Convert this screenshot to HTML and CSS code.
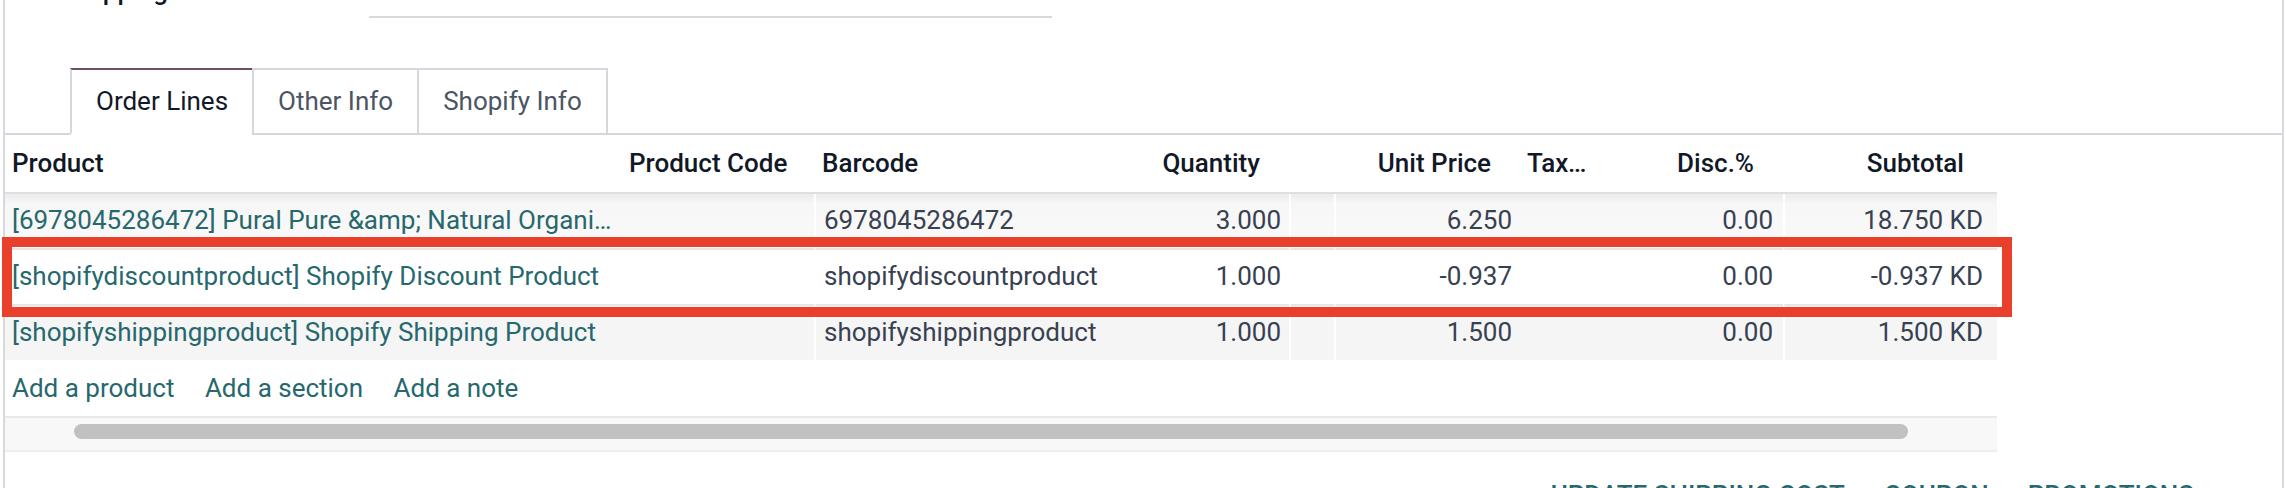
FILE: index.html
```html
<!DOCTYPE html>
<html lang="en">
<head>
<meta charset="utf-8">
<title>Order Lines</title>
<link rel="stylesheet" href="styles.css">
</head>
<body>
<div class="sheet">
  <div class="field-row">
    <label class="field-label">Shipping Address</label>
    <div class="field-input"></div>
  </div>

  <ul class="nav">
    <li class="tab active">Order Lines</li>
    <li class="tab">Other Info</li>
    <li class="tab">Shopify Info</li>
  </ul>

  <div class="list-wrap">
    <table class="list">
      <colgroup>
        <col class="w-product"><col class="w-code"><col class="w-barcode"><col class="w-qty"><col class="w-blank"><col class="w-price"><col class="w-tax"><col class="w-disc"><col class="w-sub">
      </colgroup>
      <thead>
        <tr>
          <th>Product</th>
          <th>Product Code</th>
          <th>Barcode</th>
          <th class="num">Quantity</th>
          <th></th>
          <th class="num">Unit Price</th>
          <th class="tax">Taxes</th>
          <th class="num">Disc.%</th>
          <th class="num sub">Subtotal</th>
        </tr>
      </thead>
      <tbody>
        <tr class="odd first">
          <td class="link"><span class="trunc">[6978045286472] Pural Pure &amp;amp; Natural Organic Cotton Rounds</span></td>
          <td></td>
          <td class="sep">6978045286472</td>
          <td class="num">3.000</td>
          <td class="sep"></td>
          <td class="num sep">6.250</td>
          <td></td>
          <td class="num disc">0.00</td>
          <td class="num sub sep">18.750 KD</td>
        </tr>
        <tr class="even">
          <td class="link">[shopifydiscountproduct] Shopify Discount Product</td>
          <td></td>
          <td class="sep">shopifydiscountproduct</td>
          <td class="num">1.000</td>
          <td class="sep"></td>
          <td class="num sep">-0.937</td>
          <td></td>
          <td class="num disc">0.00</td>
          <td class="num sub sep">-0.937 KD</td>
        </tr>
        <tr class="odd last">
          <td class="link">[shopifyshippingproduct] Shopify Shipping Product</td>
          <td></td>
          <td class="sep">shopifyshippingproduct</td>
          <td class="num">1.000</td>
          <td class="sep"></td>
          <td class="num sep">1.500</td>
          <td></td>
          <td class="num disc">0.00</td>
          <td class="num sub sep">1.500 KD</td>
        </tr>
        <tr class="add-row">
          <td colspan="9">
            <a class="add-link">Add a product</a>
            <a class="add-link">Add a section</a>
            <a class="add-link">Add a note</a>
          </td>
        </tr>
      </tbody>
    </table>
    <div class="hscroll"><div class="thumb"></div></div>
    <div class="highlight"></div>
  </div>

  <div class="actions">
    <a class="action">Update Shipping Cost</a>
    <a class="action">Coupon</a>
    <a class="action">Promotions</a>
  </div>
</div>
</body>
</html>
```

FILE: styles.css
```css
html, body {
  margin: 0;
  padding: 0;
  overflow: hidden;
  background: #ffffff;
}

body {
  width: 2286px;
  height: 488px;
  font-family: Roboto, "Liberation Sans", sans-serif;
  font-size: 26px;
  line-height: 39px;
  color: #374151;
}

.sheet {
  margin-left: 3px;
  width: 2277px;
  border-left: 2px solid #d8d9de;
  border-right: 2px solid #d8d9de;
  min-height: 600px;
  background: #ffffff;
}

/* top field (cut off) */
.field-row {
  display: flex;
  margin-top: -28px;
  height: 46px;
  padding-left: 61px;
}

.field-label {
  width: 303px;
  font-weight: 500;
  color: #111827;
  white-space: nowrap;
}

.field-input {
  width: 683px;
  height: 44px;
  border-bottom: 2px solid #d8d9de;
}

/* tabs */
.nav {
  list-style: none;
  margin: 50px 0 0 0;
  padding: 0 0 0 65px;
  display: flex;
  border-bottom: 2px solid #d6d7dc;
}

.tab {
  padding: 12px 24px;
  border: 2px solid #d6d7dc;
  margin-bottom: -2px;
  margin-left: -2px;
  color: #4b5563;
  background: #ffffff;
  white-space: nowrap;
}

.tab:first-child {
  margin-left: 0;
}

.tab.active {
  color: #111827;
  border-top-color: #6f4c68;
  border-bottom-color: #ffffff;
}

/* list */
.list-wrap {
  position: relative;
  width: 1992px;
}

.list {
  width: 1992px;
  table-layout: fixed;
  border-collapse: separate;
  border-spacing: 0;
}

.w-product { width: 616px; }
.w-code { width: 193px; }
.w-barcode { width: 326px; }
.w-qty { width: 149px; }
.w-blank { width: 45px; }
.w-price { width: 186px; }
.w-tax { width: 80px; }
.w-disc { width: 183px; }
.w-sub { width: 214px; }

.list th {
  padding: 9px 8px;
  text-align: left;
  font-weight: 500;
  color: #111827;
  border-bottom: 2px solid #dedfe3;
  white-space: nowrap;
  overflow: hidden;
  text-overflow: ellipsis;
}

.list th:first-child,
.list td:first-child {
  padding-left: 7px;
}

.list th.num {
  text-align: right;
  padding-right: 29px;
}

.list th.sub {
  padding-right: 33px;
}

.list th.tax {
  padding-left: 7px;
  padding-right: 6px;
}

.list td {
  padding: 7px 8px 8px;
  white-space: nowrap;
  overflow: hidden;
  text-overflow: ellipsis;
  color: #374151;
}

.list td.num {
  text-align: right;
}

.list td.disc {
  padding-right: 10px;
}

.list td.sub {
  padding-right: 14px;
}

.list td.sep {
  border-left: 2px solid #ffffff;
}

.list td.link {
  color: #26686d;
}

.trunc {
  display: block;
  overflow: hidden;
  text-overflow: ellipsis;
}

.list tr.odd td {
  background: #f5f5f5;
}

.list tr.first td {
  background: linear-gradient(#ececee 0px, #f7f7f7 10px, #f9f9f9 100%);
}

.list tr.first td,
.list tr.even td {
  border-bottom: 2px solid #e6e6ea;
}

.list tr.add-row td {
  padding: 9px 7px 8px;
  background: #ffffff;
}

.add-link {
  color: #26686d;
  margin-right: 24px;
  cursor: pointer;
}

/* fake horizontal scrollbar */
.hscroll {
  height: 26px;
  border-top: 2px solid #e9e9ea;
  border-bottom: 2px solid #eeeeef;
  background: #f8f8f8;
  padding-top: 6px;
  box-sizing: content-box;
}

.thumb {
  margin-left: 69px;
  width: 1834px;
  height: 15px;
  border-radius: 8px;
  background: #c1c1c1;
}

/* annotation highlight */
.highlight {
  position: absolute;
  left: -3px;
  top: 102px;
  width: 2010px;
  height: 80px;
  box-sizing: border-box;
  border: 10px solid #e8402a;
  pointer-events: none;
}

/* bottom actions */
.actions {
  display: flex;
  justify-content: flex-end;
  gap: 39px;
  margin-top: 24px;
  padding-right: 88px;
}

.action {
  color: #26686d;
  font-weight: 500;
  text-transform: uppercase;
  white-space: nowrap;
}
```
